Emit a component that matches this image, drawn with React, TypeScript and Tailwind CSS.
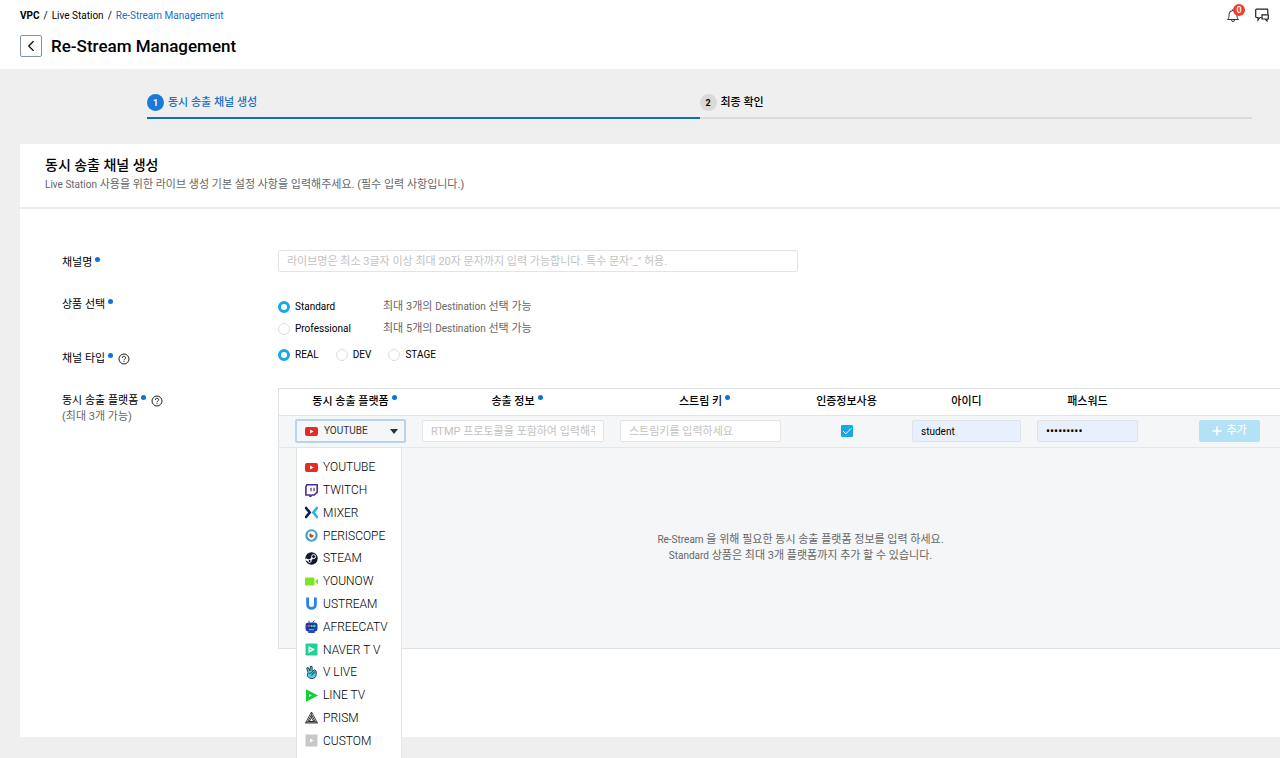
import React, { useState } from 'react';
import { ChevronLeft } from 'lucide-react';

const platforms: { name: string; icon: React.ReactNode }[] = [
    {
        name: 'YOUTUBE',
        icon: (
            <>
                <rect y="2" width="13" height="9" rx="2" fill="#e62b25" />
                <path d="M5 4.5v4l3.6-2z" fill="#fff" />
            </>
        ),
    },
    {
        name: 'TWITCH',
        icon: (
            <>
                <path d="M1.8.8h10.4v7.4L9.3 11H7L5 13v-2H.9V3z" fill="#fff" stroke="#4b2c91" strokeWidth="1.6" />
                <path d="M6 3.7v3.6M9 3.7v3.6" stroke="#4b2c91" strokeWidth="1.2" />
            </>
        ),
    },
    {
        name: 'MIXER',
        icon: (
            <>
                <path d="M1 2l3.7 4.5L1 11" fill="none" stroke="#101c4c" strokeWidth="2.6" strokeLinecap="round" />
                <path d="M12 2L8.3 6.5 12 11" fill="none" stroke="#1fb6ec" strokeWidth="2.6" strokeLinecap="round" />
            </>
        ),
    },
    {
        name: 'PERISCOPE',
        icon: (
            <>
                <circle cx="6.5" cy="6.5" r="6.2" fill="#40a4c4" />
                <path d="M6.5 2.2a4 4 0 0 1 4 4c0 2.2-2.5 4.6-4 4.6s-4-2.400-4-4.600a4 4 0 0 1 4-4z" fill="#fff" />
                <path d="M5.8 4.300a2.200 2.200 0 1 0 2.800 1.800L7 6z" fill="#d9402f" />
            </>
        ),
    },
    {
        name: 'STEAM',
        icon: (
            <>
                <circle cx="6.5" cy="6.5" r="6.2" fill="#14182c" />
                <path d="M.4 7.2l4.2 1.700 3-3.200" fill="none" stroke="#fff" strokeWidth="2" />
                <circle cx="8.6" cy="4.6" r="2" fill="#14182c" stroke="#fff" strokeWidth="1" />
                <circle cx="4.6" cy="9" r="1.5" fill="#14182c" stroke="#fff" strokeWidth=".9" />
            </>
        ),
    },
    {
        name: 'YOUNOW',
        icon: (
            <>
                <rect y="2.5" width="9.5" height="8" rx=".6" fill="#7fe22b" />
                <path d="M10 6.5L13 3.500v6z" fill="#7fe22b" />
            </>
        ),
    },
    {
        name: 'USTREAM',
        icon: <path d="M2.600.5v7a3.700 3.700 0 0 0 7.800 0v-7" fill="none" stroke="#2383f0" strokeWidth="2.8" />,
    },
    {
        name: 'AFREECATV',
        icon: (
            <>
                <path d="M4.5 2.500L3.500.8M7.500 2.500L9.500.5" stroke="#2b4bb8" strokeWidth="1" />
                <rect x=".5" y="2.5" width="12" height="9" rx="3" fill="#1d3fae" />
                <rect x="3" y="11" width="7" height="2" rx="1" fill="#2349c4" />
                <rect x="2" y="4.5" width="9" height="3.5" rx="1" fill="#0d1a52" />
                <circle cx="3.8" cy="6" r="1.5" fill="#e8336e" />
                <circle cx="6.6" cy="6" r="1.2" fill="#36d3e0" />
                <circle cx="9.3" cy="6" r="1.5" fill="#39d36b" />
                <path d="M4 9.600h5" stroke="#49c8f0" strokeWidth="1" />
            </>
        ),
    },
    {
        name: 'NAVER T V',
        icon: (
            <>
                <rect x=".5" y=".5" width="12" height="12" rx="1" fill="#1fd196" />
                <path d="M3.500 3l6.500 3.500L3.500 10z" fill="#fff" />
                <path d="M5 5.500v2l1.800-1z" fill="#1fd196" />
            </>
        ),
    },
    {
        name: 'V LIVE',
        icon: (
            <>
                <path
                    d="M3 6.500L1.700 2.200 3.200 1.300 5 5l.3-4.500 1.800 0L7.200 5.500l2.300-1.800 1.700 1.500v3.300c0 2.500-1.800 4-4.200 4S2.300 11 2.300 9z"
                    fill="#54d3ee"
                    stroke="#17303c"
                    strokeWidth=".9"
                    strokeLinejoin="round"
                />
                <path d="M4 7.500l3-.8 1.200 1.500-2.400 1.300M8 5.700l.8 1.800M9.700 5.200l.3 2" fill="none" stroke="#17303c" strokeWidth=".8" />
            </>
        ),
    },
    {
        name: 'LINE TV',
        icon: (
            <>
                <path d="M1 .2l12 6.300-12 6.300z" fill="#17cf37" />
                <path d="M4 5v3l2.600-1.500z" fill="#fff" />
            </>
        ),
    },
    {
        name: 'PRISM',
        icon: (
            <>
                <path d="M6.500 1L12.500 12H.5z" fill="none" stroke="#333" strokeWidth=".9" />
                <path d="M6.500 3.800L10.500 11H2.500zM6.500 6.500L8.800 10.500H4.200z" fill="none" stroke="#222" strokeWidth=".9" />
                <path d="M6.500 1v6M.5 12l4.500-2.500M12.500 12L8 9.500" stroke="#333" strokeWidth=".7" />
            </>
        ),
    },
    {
        name: 'CUSTOM',
        icon: (
            <>
                <rect x=".5" y=".5" width="12" height="12" fill="#c8c8c8" />
                <path d="M5 4.500v4l3.300-2z" fill="#fff" />
            </>
        ),
    },
];

const field =
    'block h-[22px] w-full rounded-xs border border-[#e2e4e6] bg-white px-2 text-[11px] text-black outline-none placeholder:text-[#c2c2c2]';

export default function App() {
    const [plan, setPlan] = useState('Standard');
    const [type, setType] = useState('REAL');
    const [platform, setPlatform] = useState('YOUTUBE');
    const current = platforms.find((p) => p.name === platform);

    return (
        <div className="min-h-screen overflow-hidden bg-[#efefef] pb-[22px] font-[Roboto,'Noto_Sans_CJK_KR',sans-serif] text-[11px] leading-4 text-black">
            <header className="flex h-[69px] items-start justify-between bg-white pt-2 pr-[11px] pl-5">
                <div>
                    <nav aria-label="breadcrumb" className="flex gap-1 text-[10px]">
                        <a href="#vpc" className="font-bold">VPC</a>
                        <span>/</span>
                        <a href="#live-station">Live Station</a>
                        <span>/</span>
                        <a href="#re-stream" className="text-[#1a6fc4]">Re-Stream Management</a>
                    </nav>
                    <div className="mt-[11px] flex items-center gap-[9px]">
                        <button
                            type="button"
                            aria-label="Back"
                            className="flex size-[22px] items-center justify-center rounded-xs border border-[#8494a8]"
                        >
                            <ChevronLeft size={18} strokeWidth={1.5} />
                        </button>
                        <h1 className="text-[17px] leading-5 font-medium">Re-Stream Management</h1>
                    </div>
                </div>
                <div className="flex items-center gap-4">
                    <button type="button" aria-label="Notifications" className="relative">
                        <BellIcon />
                        <span className="absolute -top-1 left-1.5 flex size-3 items-center justify-center rounded-full bg-[#f03e2d] text-[9px] font-medium text-white">
                            0
                        </span>
                    </button>
                    <button type="button" aria-label="Messages">
                        <ChatIcon />
                    </button>
                </div>
            </header>

            {/* Steps */}
            <ol className="mt-[25px] mr-7 ml-[147px] flex leading-[18px] font-medium">
                <li className="flex h-[25px] flex-1 items-start gap-1 border-b-2 border-[#0f6ebd] text-[#1a6fc4]">
                    <StepNumber className="bg-[#1a7ad9] text-white">1</StepNumber>
                    동시 송출 채널 생성
                </li>
                <li className="flex h-[25px] flex-1 items-start gap-1 border-b-2 border-[#dadada]">
                    <StepNumber className="bg-[#d9d9d9]">2</StepNumber>
                    최종 확인
                </li>
            </ol>

            <main className="mt-[25px] ml-5 bg-white pb-[88px]">
                <div className="border-b-2 border-[#ebebeb] px-[25px] pt-[11px] pb-3.5">
                    <h2 className="text-sm leading-5 font-medium">동시 송출 채널 생성</h2>
                    <p className="mt-0.5 text-[#666]">
                        <span className="text-[10px]">Live Station</span> 사용을 위한 라이브 생성 기본 설정 사항을 입력해주세요. (필수 입력 사항입니다.)
                    </p>
                </div>

                <form className="pt-[41px] pl-[42px]" onSubmit={(e) => e.preventDefault()}>
                    <div className="flex">
                        <div className="w-[216px] shrink-0 pt-[5px]">
                            <label htmlFor="channel">채널명<Required /></label>
                        </div>
                        <div className="w-[520px]">
                            <input
                                id="channel"
                                className={field}
                                placeholder={'라이브명은 최소 3글자 이상 최대 20자 문자까지 입력 가능합니다. 특수 문자"_" 허용.'}
                            />
                        </div>
                    </div>

                    <fieldset className="mt-6 flex">
                        <legend className="float-left w-[216px] shrink-0 pt-px">상품 선택<Required /></legend>
                        <div>
                            {[
                                { name: 'Standard', count: 3 },
                                { name: 'Professional', count: 5 },
                            ].map((p) => (
                                <div key={p.name} className="flex h-[22px] items-center">
                                    <div className="w-[105px]">
                                        <Radio name="plan" value={p.name} checked={plan === p.name} onChange={setPlan} />
                                    </div>
                                    <span className="text-[#666]">
                                        최대 {p.count}개의 <span className="text-[10px]">Destination</span> 선택 가능
                                    </span>
                                </div>
                            ))}
                        </div>
                    </fieldset>

                    <fieldset className="mt-1 flex">
                        <legend className="float-left w-[216px] shrink-0 pt-[7px]">
                            <span className="flex items-center">채널 타입<Required /><HelpIcon /></span>
                        </legend>
                        <div className="flex h-[22px] items-center gap-[17px]">
                            {['REAL', 'DEV', 'STAGE'].map((t) => (
                                <Radio key={t} name="type" value={t} checked={type === t} onChange={setType} />
                            ))}
                        </div>
                    </fieldset>

                    <div className="mt-[21px] flex">
                        <div className="w-[216px] shrink-0 pt-[5px]">
                            <div className="flex items-center">동시 송출 플랫폼<Required /><HelpIcon /></div>
                            <div className="text-[#666]">(최대 3개 가능)</div>
                        </div>
                        <div className="min-w-0 flex-1 border-y border-l border-[#e0e2e4] bg-[#f5f6f8]">
                            <table className="w-full table-fixed border-collapse">
                                <colgroup>
                                    <col className="w-[135px]" />
                                    <col />
                                    <col className="w-[177px]" />
                                    <col className="w-[115px]" />
                                    <col className="w-[125px]" />
                                    <col className="w-[117px]" />
                                    <col className="w-[134px]" />
                                </colgroup>
                                <thead>
                                    <tr className="h-[26px] border-b border-[#e4e6e8] bg-white">
                                        <th className="pr-2 pl-6 font-medium">동시 송출 플랫폼<Required /></th>
                                        <th className="pl-2 font-medium">송출 정보<Required /></th>
                                        <th className="pl-2 font-medium">스트림 키<Required /></th>
                                        <th className="font-medium">인증정보사용</th>
                                        <th className="font-medium">아이디</th>
                                        <th className="font-medium">패스워드</th>
                                        <th aria-label="추가" />
                                    </tr>
                                </thead>
                                <tbody>
                                    <tr className="h-8 border-b border-[#e4e6e8]">
                                        <td className="pr-2 pl-4">
                                            <div className="relative">
                                                <select
                                                    aria-label="동시 송출 플랫폼"
                                                    value={platform}
                                                    onChange={(e) => setPlatform(e.target.value)}
                                                    className="block h-6 w-full appearance-none rounded-xs border-2 border-[#b9d3ea] bg-[#f5f6f8] pl-[27px] text-[10px] text-[#333] outline-none"
                                                >
                                                    {platforms.map((p) => (
                                                        <option key={p.name}>{p.name}</option>
                                                    ))}
                                                </select>
                                                <svg viewBox="0 0 13 13" className="pointer-events-none absolute top-1.5 left-2.5 size-[13px]">
                                                    {current?.icon}
                                                </svg>
                                                <svg viewBox="0 0 8 5" className="pointer-events-none absolute top-2.5 right-2 h-[5px] w-2">
                                                    <path d="M0 0h8L4 5z" fill="#234" />
                                                </svg>
                                                <ul
                                                    role="listbox"
                                                    aria-label="동시 송출 플랫폼"
                                                    className="absolute top-7 left-px z-10 flex h-[318px] w-[106px] flex-col border border-[#e2e4e6] bg-white pt-2 pb-3 text-xs font-light text-black"
                                                >
                                                    {platforms.map((p) => (
                                                        <li
                                                            key={p.name}
                                                            role="option"
                                                            aria-selected={p.name === platform}
                                                            onClick={() => setPlatform(p.name)}
                                                            className="flex flex-1 cursor-pointer items-center gap-[5px] pl-2 whitespace-nowrap"
                                                        >
                                                            <svg viewBox="0 0 13 13" className="size-[13px]">{p.icon}</svg>
                                                            {p.name}
                                                        </li>
                                                    ))}
                                                </ul>
                                            </div>
                                        </td>
                                        <td className="px-2">
                                            <input aria-label="송출 정보" className={field} placeholder="RTMP 프로토콜을 포함하여 입력해주세요" />
                                        </td>
                                        <td className="px-2">
                                            <input aria-label="스트림 키" className={field} placeholder="스트림키를 입력하세요" />
                                        </td>
                                        <td>
                                            <label className="relative mx-auto block size-3">
                                                <input
                                                    type="checkbox"
                                                    defaultChecked
                                                    aria-label="인증정보사용"
                                                    className="peer block size-3 appearance-none rounded-[1px] border border-[#ccc] bg-white checked:border-[#18a8e8] checked:bg-[#18a8e8]"
                                                />
                                                <svg
                                                    viewBox="0 0 12 12"
                                                    className="pointer-events-none absolute inset-0 hidden size-3 peer-checked:block"
                                                >
                                                    <path d="M2 6l2.800 2.800L10.200 3.300" fill="none" stroke="#fff" />
                                                </svg>
                                            </label>
                                        </td>
                                        <td className="px-2">
                                            <input
                                                aria-label="아이디"
                                                defaultValue="student"
                                                className="block h-[22px] w-full rounded-xs border border-[#dfe3e8] bg-[#e8f0fe] px-2 text-[10px] outline-none"
                                            />
                                        </td>
                                        <td className="px-2">
                                            <input
                                                aria-label="패스워드"
                                                type="password"
                                                defaultValue="password1"
                                                className="block h-[22px] w-full rounded-xs border border-[#dfe3e8] bg-[#e8f0fe] px-2 text-xs outline-none"
                                            />
                                        </td>
                                        <td className="pr-5">
                                            <button
                                                type="button"
                                                className="ml-auto flex h-[22px] w-[61px] items-center justify-center gap-1 rounded-xs bg-[#b3e1f5] font-medium text-white"
                                            >
                                                <svg viewBox="0 0 10 10" className="size-2.5">
                                                    <path d="M5 .5v9M.5 5h9" stroke="#fff" strokeWidth="1.500" />
                                                </svg>
                                                추가
                                            </button>
                                        </td>
                                    </tr>
                                </tbody>
                            </table>
                            <div className="flex h-[200px] flex-col items-center justify-center pl-[42px] text-[#666]">
                                <p><span className="text-[10px]">Re-Stream</span> 을 위해 필요한 동시 송출 플랫폼 정보를 입력 하세요.</p>
                                <p><span className="text-[10px]">Standard</span> 상품은 최대 3개 플랫폼까지 추가 할 수 있습니다.</p>
                            </div>
                        </div>
                    </div>
                </form>
            </main>
        </div>
    );
}

function StepNumber({ className, children }: { className: string; children: React.ReactNode }) {
    return (
        <span className={`flex size-[17px] items-center justify-center rounded-full text-[9px] font-bold ${className}`}>
            {children}
        </span>
    );
}

function Required() {
    return <span className="mb-2 ml-[3px] inline-block size-[5px] rounded-full bg-[#0f73d0] align-middle" />;
}

function Radio({ name, value, checked, onChange }: {
    name: string;
    value: string;
    checked: boolean;
    onChange: (value: string) => void;
}) {
    return (
        <label className="flex items-center gap-[5px] text-[10px]">
            <input
                type="radio"
                name={name}
                checked={checked}
                onChange={() => onChange(value)}
                className="size-3 appearance-none rounded-full border border-[#ddd] bg-white checked:border-[3px] checked:border-[#18a8e8]"
            />
            {value}
        </label>
    );
}

function HelpIcon() {
    return (
        <svg viewBox="0 0 12 12" className="ml-[5px] size-3" fill="none" stroke="#222">
            <circle cx="6" cy="6" r="5" />
            <path d="M4.400 4.900a1.600 1.600 0 1 1 2.400 1.300c-.6.300-.8.500-.8 1.100M6 8.200v1" />
        </svg>
    );
}

function BellIcon() {
    return (
        <svg viewBox="0 0 12 14" className="h-3.5 w-3" fill="none" stroke="#333">
            <path d="M.5 11.500h11C10 10 10 9 10 6.500a4 4 0 0 0-8 0C2 9 2 10 .5 11.500zM4.500 12a1.500 1.500 0 0 0 3 0M6 2.500V1" />
        </svg>
    );
}

function ChatIcon() {
    return (
        <svg viewBox="0 0 14 14" className="size-3.5" fill="none" stroke="#222" strokeWidth="1.200">
            <path d="M6.500 9.500H5L3 12V9.500H1.500a.8.8 0 0 1-.8-.8V2a.8.8 0 0 1 .8-.8H12a.8.8 0 0 1 .8.8v4" />
            <path d="M7 6.800h6.300v4.200h-1.300v1.800L10.200 11H7z" />
        </svg>
    );
}
